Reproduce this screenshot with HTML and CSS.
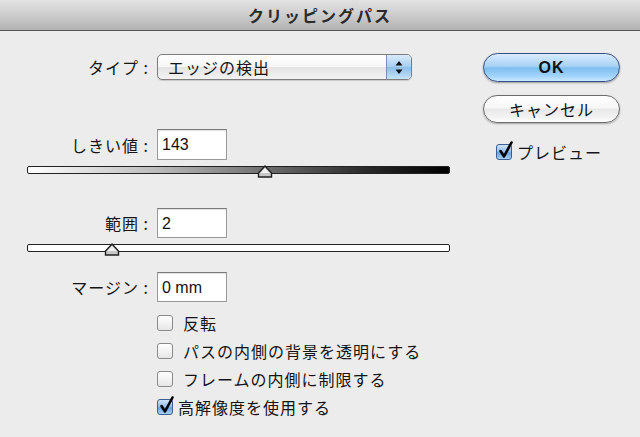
FILE: index.html
```html
<!DOCTYPE html>
<html lang="ja">
<head>
<meta charset="utf-8">
<title>クリッピングパス</title>
<link rel="stylesheet" href="styles.css">
</head>
<body>
<div class="window">
  <div class="titlebar">クリッピングパス</div>
  <div class="main">
    <div class="form">
      <div class="row row-type">
        <span class="label">タイプ :</span>
        <div class="popup">
          <span class="popup-text">エッジの検出</span>
          <span class="popup-arrows">
            <svg width="8" height="13" viewBox="0 0 8 13"><path d="M4 0 L7.5 4.5 L0.5 4.5 Z M4 13 L7.5 8.5 L0.5 8.5 Z" fill="#111"/></svg>
          </span>
        </div>
      </div>

      <div class="row row-threshold">
        <span class="label">しきい値 :</span>
        <div class="field">143</div>
      </div>
      <div class="slider slider-gradient">
        <svg class="thumb thumb-1" width="16" height="13" viewBox="0 0 16 13"><path d="M8 1 L14.5 8 L14.5 12 L1.5 12 L1.5 8 Z" fill="#c8c8c8" stroke="#222" stroke-width="1.4"/><path d="M8 3 L12.5 8 L3.5 8 Z" fill="#f2f2f2"/></svg>
      </div>

      <div class="row row-range">
        <span class="label">範囲 :</span>
        <div class="field">2</div>
      </div>
      <div class="slider slider-plain">
        <svg class="thumb thumb-2" width="16" height="13" viewBox="0 0 16 13"><path d="M8 1 L14.5 8 L14.5 12 L1.5 12 L1.5 8 Z" fill="#c8c8c8" stroke="#222" stroke-width="1.4"/><path d="M8 3 L12.5 8 L3.5 8 Z" fill="#f2f2f2"/></svg>
      </div>

      <div class="row row-margin">
        <span class="label">マージン :</span>
        <div class="field">0 mm</div>
      </div>

      <ul class="checks">
        <li class="check"><span class="box"></span><span>反転</span></li>
        <li class="check"><span class="box"></span><span>パスの内側の背景を透明にする</span></li>
        <li class="check"><span class="box"></span><span>フレームの内側に制限する</span></li>
        <li class="check"><span class="box checked"><svg class="tick" width="18" height="20" viewBox="0 0 18 20"><path d="M3.5 11 L7 16.5 L14.5 2.5" fill="none" stroke="#000" stroke-width="2.6" stroke-linecap="round" stroke-linejoin="round"/></svg></span><span>高解像度を使用する</span></li>
      </ul>
    </div>

    <div class="side">
      <button class="btn btn-ok">OK</button>
      <button class="btn btn-cancel">キャンセル</button>
      <div class="check preview"><span class="box checked"><svg class="tick" width="18" height="20" viewBox="0 0 18 20"><path d="M3.5 11 L7 16.5 L14.5 2.5" fill="none" stroke="#000" stroke-width="2.6" stroke-linecap="round" stroke-linejoin="round"/></svg></span><span>プレビュー</span></div>
    </div>
  </div>
</div>
</body>
</html>
```

FILE: styles.css
```css
html, body {
  margin: 0;
  padding: 0;
}
body {
  width: 640px;
  height: 437px;
  overflow: hidden;
  background: #ececec;
  font-family: "Noto Sans CJK JP", "Noto Sans", sans-serif;
  color: #151515;
  font-size: 16px;
}
.window {
  width: 640px;
  height: 437px;
}
.titlebar {
  height: 30px;
  line-height: 31px;
  text-align: center;
  font-weight: bold;
  font-size: 16px;
  letter-spacing: 2px;
  color: #2a2a2a;
  background: linear-gradient(#e2e2e2 0%, #cfcfcf 45%, #b3b3b3 100%);
  border-bottom: 1px solid #555;
}
.main {
  display: flex;
}
.form {
  width: 460px;
}
.row {
  display: flex;
  align-items: center;
}
.label {
  width: 157px;
  box-sizing: border-box;
  padding-right: 8px;
  text-align: right;
  letter-spacing: 1px;
  white-space: nowrap;
}
.row-type { margin-top: 23px; height: 26px; }
.popup {
  width: 255px;
  height: 26px;
  box-sizing: border-box;
  border: 1px solid #7d7d7d;
  border-radius: 5px;
  background: linear-gradient(#ffffff 0%, #f6f6f6 50%, #e4e4e4 51%, #f2f2f2 100%);
  display: flex;
  overflow: hidden;
  box-shadow: 0 1px 1px rgba(0,0,0,0.15);
}
.popup-text {
  flex: 1;
  padding-left: 10px;
  line-height: 24px;
  letter-spacing: 1px;
}
.popup-arrows {
  width: 24px;
  border-left: 1px solid #7a8fb5;
  background: linear-gradient(#d8ebfb 0%, #a6cdf1 50%, #8cbde9 51%, #c4e2fb 100%);
  display: flex;
  align-items: center;
  justify-content: center;
}
.field {
  width: 70px;
  height: 31px;
  box-sizing: border-box;
  background: #fff;
  border: 1px solid #9a9a9a;
  border-top-color: #7a7a7a;
  padding: 0 0 0 4px;
  line-height: 29px;
  font-family: "Liberation Sans", "Noto Sans", sans-serif;
  font-size: 16px;
  color: #111;
  box-shadow: inset 0 1px 1px rgba(0,0,0,0.12);
}
.row-threshold { margin-top: 49px; }
.row-range { margin-top: 34px; }
.row-margin { margin-top: 20px; }
.row-range .field, .row-margin .field { height: 30px; }

.slider {
  position: relative;
  margin-left: 27px;
  width: 423px;
  height: 8px;
  box-sizing: border-box;
  border: 1.5px solid #222;
  border-radius: 2px;
  margin-top: 6px;
}
.slider-gradient {
  background: linear-gradient(to right, #ffffff 0%, #bdbdbd 30%, #6a6a6a 58%, #2a2a2a 80%, #000 100%);
}
.slider-plain {
  background: #fff;
}
.thumb {
  position: absolute;
  top: -2px;
}
.thumb-1 { left: 229px; }
.thumb-2 { left: 76px; }

.checks {
  list-style: none;
  margin: 7px 0 0 0;
  padding: 0 0 0 157px;
}
.check {
  display: flex;
  align-items: center;
  height: 28px;
  letter-spacing: 1px;
  white-space: nowrap;
}
.box {
  position: relative;
  width: 16px;
  height: 16px;
  box-sizing: border-box;
  border: 1px solid #8a8a8a;
  border-radius: 3px;
  background: linear-gradient(#ffffff 0%, #f3f3f3 50%, #e6e6e6 100%);
  margin-right: 10px;
  flex: none;
}
.box.checked {
  border-color: #3c5f96;
  background: linear-gradient(#cfe3f8 0%, #8dbbe8 50%, #6aa2dc 55%, #a8d0f5 100%);
  margin-right: 5px;
}
.tick {
  position: absolute;
  left: 0px;
  top: -5px;
}

.side {
  margin-left: 23px;
  width: 137px;
  display: flex;
  flex-direction: column;
}
.btn {
  width: 137px;
  border-radius: 15px;
  font-family: "Noto Sans CJK JP", "Liberation Sans", sans-serif;
  font-size: 16px;
  letter-spacing: 1px;
  padding: 0;
  color: #111;
}
.btn-ok {
  margin-top: 22px;
  height: 29px;
  font-family: "Liberation Sans", "Noto Sans", sans-serif;
  font-weight: bold;
  border: 1px solid #384f86;
  background: linear-gradient(#d9ecfd 0%, #a9d2f6 45%, #7fbdef 52%, #9fd2fa 80%, #c8e8ff 100%);
  box-shadow: 0 1px 2px rgba(0,0,0,0.35);
}
.btn-cancel {
  margin-top: 13px;
  height: 28px;
  border: 1px solid #6c6c6c;
  background: linear-gradient(#ffffff 0%, #f7f7f7 45%, #e8e8e8 52%, #f4f4f4 85%, #ffffff 100%);
  box-shadow: 0 1px 2px rgba(0,0,0,0.3);
}
.preview {
  margin-top: 20px;
  margin-left: 13px;
  height: 17px;
}
```
